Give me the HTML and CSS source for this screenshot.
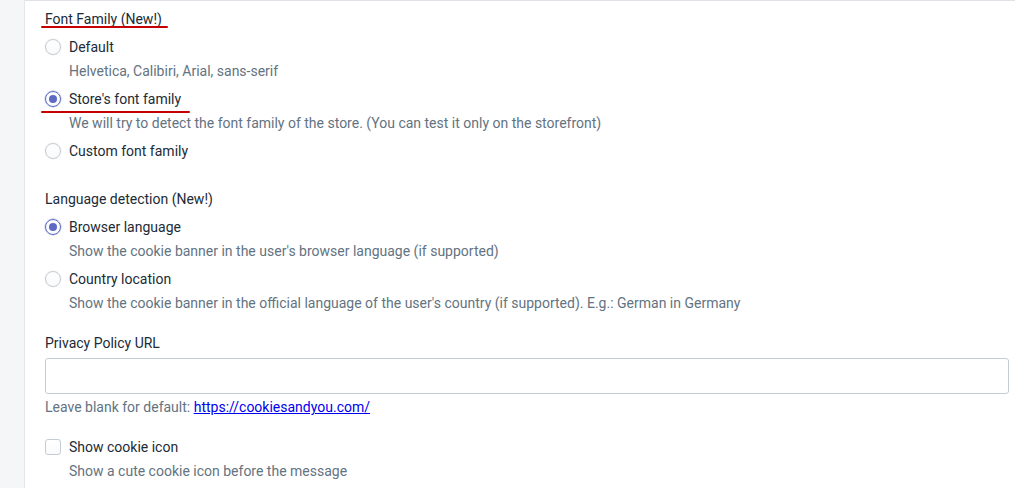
FILE: index.html
```html
<!DOCTYPE html>
<html lang="en">
<head>
<meta charset="utf-8">
<title>Settings</title>
<link rel="stylesheet" href="styles.css">
</head>
<body>
<div class="page">
  <aside class="rail"></aside>
  <main class="card">
    <section class="group">
      <div class="group-title marked marked-title">Font Family (New!)</div>
      <ul class="choices">
        <li class="choice">
          <label class="choice-row"><span class="radio"></span><span class="choice-label">Default</span></label>
          <div class="help">Helvetica, Calibiri, Arial, sans-serif</div>
        </li>
        <li class="choice">
          <label class="choice-row marked marked-choice"><span class="radio checked"></span><span class="choice-label">Store's font family</span></label>
          <div class="help">We will try to detect the font family of the store. (You can test it only on the storefront)</div>
        </li>
        <li class="choice">
          <label class="choice-row"><span class="radio"></span><span class="choice-label">Custom font family</span></label>
        </li>
      </ul>
    </section>

    <section class="group group-lang">
      <div class="group-title">Language detection (New!)</div>
      <ul class="choices">
        <li class="choice">
          <label class="choice-row"><span class="radio checked"></span><span class="choice-label">Browser language</span></label>
          <div class="help">Show the cookie banner in the user's browser language (if supported)</div>
        </li>
        <li class="choice">
          <label class="choice-row"><span class="radio"></span><span class="choice-label">Country location</span></label>
          <div class="help">Show the cookie banner in the official language of the user's country (if supported). E.g.: German in Germany</div>
        </li>
      </ul>
    </section>

    <section class="group group-url">
      <div class="field-label">Privacy Policy URL</div>
      <div class="input"></div>
      <div class="field-help">Leave blank for default: <a class="link" href="#">https://cookiesandyou.com/</a></div>
    </section>

    <section class="group group-icon">
      <label class="choice-row"><span class="checkbox"></span><span class="choice-label">Show cookie icon</span></label>
      <div class="help">Show a cute cookie icon before the message</div>
    </section>
  </main>
</div>
</body>
</html>
```

FILE: styles.css
```css
* { box-sizing: border-box; }
html, body { margin: 0; padding: 0; background: #fff; }
body {
  font-family: Roboto, "Liberation Sans", Arial, sans-serif;
  font-size: 14px;
  line-height: 20px;
  color: #212b36;
  overflow: hidden;
}
.page {
  display: flex;
  height: 488px;
}
.rail {
  width: 25px;
  flex: none;
  background: #f4f6f8;
  border-right: 1px solid #e3e7eb;
}
.card {
  flex: 1;
  border-top: 1px solid #dfe3e8;
  padding: 8px 6px 0 20px;
}
.group-title { margin-bottom: 4px; }
.choices { list-style: none; margin: 0; padding: 0; }
.choice + .choice { margin-top: 4px; }
.choice-row {
  display: flex;
  align-items: center;
  gap: 8px;
  padding: 4px 0;
}
.radio {
  width: 16px;
  height: 16px;
  flex: none;
  border-radius: 50%;
  border: 1px solid #c4cdd5;
  background: linear-gradient(180deg, #fff, #f9fafb);
  box-shadow: 0 0 0 0.5px rgba(196, 205, 213, 0.4);
  display: flex;
  align-items: center;
  justify-content: center;
}
.radio.checked {
  border-color: #5c6ac4;
  box-shadow: 0 0 0 0.5px rgba(92, 106, 196, 0.5);
}
.radio.checked::after {
  content: "";
  width: 8px;
  height: 8px;
  border-radius: 50%;
  background: #5c6ac4;
}
.checkbox {
  width: 16px;
  height: 16px;
  flex: none;
  border: 1px solid #c4cdd5;
  border-radius: 3px;
  background: linear-gradient(180deg, #fff, #f9fafb);
}
.help {
  padding-left: 24px;
  color: #637381;
}
.marked { position: relative; }
.marked::after {
  content: "";
  position: absolute;
  left: -4px;
  height: 2px;
  background: #c40000;
  border-radius: 1px;
}
.marked-title { display: inline-block; }
.marked-title::after { bottom: 1px; width: 127px; }
.marked-choice::after { bottom: 0; width: 149px; }
.group-lang { margin-top: 24px; }
.group-url { margin-top: 20px; }
.field-label { margin-bottom: 5px; }
.input {
  height: 36px;
  border: 1px solid #c4cdd5;
  border-radius: 3px;
  background: #fff;
}
.field-help { margin-top: 3px; color: #637381; }
.link { color: #0000ee; text-decoration: underline; }
.group-icon { margin-top: 16px; }
```
